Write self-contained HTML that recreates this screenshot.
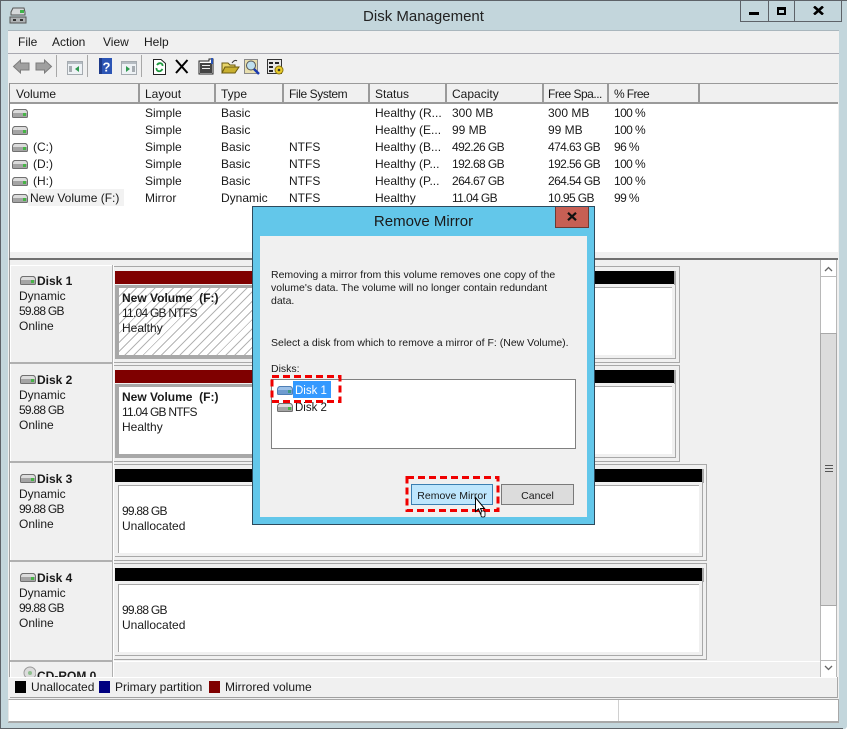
<!DOCTYPE html>
<html><head><meta charset="utf-8"><style>
html,body{margin:0;padding:0;background:#fff}
#w{position:relative;width:847px;height:730px;overflow:hidden;background:#fff;font:12px "Liberation Sans",sans-serif;color:#1a1a1a}
#w div,#w svg.a{position:absolute}
.t{white-space:nowrap;line-height:15px}
.n{letter-spacing:-.6px}
.u{letter-spacing:-.75px}
.b{font-weight:bold}
</style></head><body><div id="w">
<svg width="0" height="0" style="position:absolute"><defs>
<symbol id="d" viewBox="0 0 16 10"><path d="M2.500 1.500H13.500Q15.500 2.500 15.500 4.500V8.500Q15.500 9.500 14.500 9.500H1.500Q.5 9.500 .5 8.500V4.500Q.5 2.500 2.500 1.500Z" fill="#dcdcdc" stroke="#707070"/><rect x="1" y="5" width="14" height="4" fill="#a4a4a4"/><rect x="11" y="5" width="3" height="3" fill="#46b446"/></symbol>
<symbol id="db" viewBox="0 0 16 10"><path d="M2.500 1.500H13.500Q15.500 2.500 15.500 4.500V8.500Q15.500 9.500 14.500 9.500H1.500Q.5 9.500 .5 8.500V4.500Q.5 2.500 2.500 1.500Z" fill="#9cc0e8" stroke="#4f7fb5"/><rect x="1" y="5" width="14" height="4" fill="#6f9ccf"/><rect x="11" y="5" width="3" height="3" fill="#3f9a7f"/></symbol>
</defs></svg>

<!-- window frame -->
<div style="left:0;top:0;width:847px;height:729px;background:#c3d6dc;border-radius:0 0 3px 3px"></div>
<div style="left:0;top:0;width:847px;height:1px;background:#5d6268"></div>
<div style="left:0;top:0;width:1px;height:729px;background:#5d6268"></div>
<div style="left:0;top:728px;width:843px;height:1px;background:#5d6268"></div>
<!-- title -->
<svg class="a" style="left:9px;top:7px" width="18" height="17" viewBox="0 0 18 17"><path d="M2 5L4 1H15L16 5V8H2Z" fill="#d5d8da" stroke="#555"/><rect x="11" y="3" width="4" height="3" fill="#3fb34a"/><rect x="1" y="10" width="16" height="6" fill="#b0b4b6" stroke="#555"/><rect x="4" y="12" width="3" height="2" fill="#333"/><rect x="11" y="12" width="3" height="2" fill="#333"/></svg>
<div class="t" style="left:0;top:9px;width:847px;text-align:center;font-size:15px;color:#222">Disk Management</div>
<div style="left:740px;top:0;width:102px;height:22px;box-sizing:border-box;border:1px solid #5d6268;border-top:0"></div>
<div style="left:768px;top:0;width:1px;height:21px;background:#5d6268"></div>
<div style="left:794px;top:0;width:1px;height:21px;background:#5d6268"></div>
<div style="left:749px;top:12px;width:10px;height:3px;background:#000"></div>
<div style="left:777px;top:7px;width:9px;height:8px;box-sizing:border-box;border:2px solid #000;border-top-width:3px"></div>
<svg class="a" style="left:813px;top:6px" width="11" height="9" viewBox="0 0 11 9"><path d="M1 .5L10 8.500M10 .5L1 8.500" stroke="#000" stroke-width="2.600"/></svg>

<!-- client -->
<div style="left:8px;top:31px;width:831px;height:692px;background:#f0f0f0"></div>
<div style="left:8px;top:30px;width:831px;height:1px;background:#a9b6bd"></div>
<div style="left:8px;top:53px;width:831px;height:1px;background:#a8a8b0"></div>
<div class="t" style="left:18px;top:35px">File</div>
<div class="t" style="left:52px;top:35px">Action</div>
<div class="t" style="left:103px;top:35px">View</div>
<div class="t" style="left:144px;top:35px">Help</div>

<!-- toolbar -->
<svg class="a" style="left:10px;top:55px" width="280" height="28" viewBox="0 0 280 28">
<path d="M3.500 11.500L10.500 5V8H19V15H10.500V18Z" fill="#a0a0a0" stroke="#7c7c7c"/>
<path d="M41.500 11.500L34.500 5V8H26V15H34.500V18Z" fill="#a0a0a0" stroke="#7c7c7c"/>
<rect x="46" y="0" width="1" height="22" fill="#a8a8a8"/>
<rect x="57.500" y="6.500" width="15" height="13" fill="#eef2f5" stroke="#a5abb0"/><rect x="58" y="7" width="14" height="2" fill="#b5bcc2"/><path d="M69 11L65 14L69 17Z" fill="#2f9a4f"/><rect x="59" y="11" width="3" height="6" fill="#a5abb0"/>
<rect x="77" y="0" width="1" height="22" fill="#a8a8a8"/>
<rect x="89" y="3" width="13" height="16" fill="#2c55b5"/><rect x="89" y="3" width="3" height="16" fill="#1d3a8a"/>
<text x="92.500" y="16.500" font-family="Liberation Sans" font-weight="bold" font-size="13" fill="#fff">?</text>
<rect x="111.500" y="6.500" width="15" height="13" fill="#eef2f5" stroke="#a5abb0"/><rect x="112" y="7" width="14" height="2" fill="#b5bcc2"/><path d="M116 11L120 14L116 17Z" fill="#2f9a4f"/><rect x="122" y="11" width="3" height="6" fill="#a5abb0"/>
<rect x="131" y="0" width="1" height="22" fill="#a8a8a8"/>
<path d="M143.500 4.500H151L155.500 8.500V19.500H143.500Z" fill="#fff" stroke="#222"/><path d="M147 10C149 7 153 8 152.500 11M152.500 14C150 18 146 16 146.500 13" stroke="#1f9a3f" stroke-width="1.800" fill="none"/>
<path d="M166 5L177.500 18M177.500 5L166 18" stroke="#000" stroke-width="2"/>
<path d="M189 6H199V4H203V19H189Z" fill="#fff" stroke="#222"/><rect x="190" y="8" width="12" height="10" fill="#444"/><rect x="192" y="10" width="8" height="1" fill="#eee"/><rect x="192" y="13" width="8" height="1" fill="#eee"/><rect x="201" y="3" width="2" height="6" fill="#2c55b5"/>
<path d="M212 8H218L220 10H225V18H212Z" fill="#e8d56a" stroke="#6a5a10"/><path d="M212 18L215 12H229L225 18Z" fill="#c9b030" stroke="#6a5a10"/><path d="M222 8C224 5 226 5 227 6" stroke="#333" fill="none"/>
<rect x="234.500" y="4.500" width="13" height="14" fill="#e8dfae" stroke="#888"/><circle cx="241" cy="10.500" r="4.500" fill="#bfe0ef" stroke="#555"/><path d="M244 14L249 19" stroke="#1a3ab0" stroke-width="2.500"/>
<rect x="257.500" y="4.500" width="14" height="14" fill="#e8e8e8" stroke="#333"/><rect x="259" y="7" width="4" height="2" fill="#222"/><rect x="265" y="7" width="4" height="2" fill="#222"/><rect x="259" y="11" width="4" height="2" fill="#222"/><rect x="259" y="15" width="4" height="2" fill="#222"/><circle cx="269" cy="15" r="4" fill="#e8cb2a" stroke="#8a7510"/><circle cx="269" cy="15" r="1.300" fill="#333"/>
</svg>

<!-- list header -->
<div style="left:9px;top:83px;width:829px;height:1px;background:#9a9a9a"></div>
<div style="left:9px;top:102px;width:829px;height:2px;background:#9a9a9a"></div>
<div style="left:9px;top:83px;width:1px;height:175px;background:#8a8a8a"></div>
<div style="left:138px;top:84px;width:2px;height:18px;background:#9a9a9a"></div>
<div style="left:214px;top:84px;width:2px;height:18px;background:#9a9a9a"></div>
<div style="left:282px;top:84px;width:2px;height:18px;background:#9a9a9a"></div>
<div style="left:368px;top:84px;width:2px;height:18px;background:#9a9a9a"></div>
<div style="left:445px;top:84px;width:2px;height:18px;background:#9a9a9a"></div>
<div style="left:542px;top:84px;width:2px;height:18px;background:#9a9a9a"></div>
<div style="left:607px;top:84px;width:2px;height:18px;background:#9a9a9a"></div>
<div style="left:698px;top:84px;width:2px;height:18px;background:#9a9a9a"></div>
<div class="t" style="left:16px;top:87px">Volume</div>
<div class="t" style="left:145px;top:87px">Layout</div>
<div class="t" style="left:221px;top:87px">Type</div>
<div class="t" style="left:289px;top:87px;letter-spacing:-.4px">File System</div>
<div class="t" style="left:375px;top:87px">Status</div>
<div class="t" style="left:452px;top:87px">Capacity</div>
<div class="t" style="left:548px;top:87px;letter-spacing:-.5px">Free Spa...</div>
<div class="t" style="left:614px;top:87px;letter-spacing:-.6px">% Free</div>

<!-- list body -->
<div style="left:10px;top:104px;width:828px;height:148px;background:#fff"></div>
<div style="left:10px;top:252px;width:828px;height:6px;background:#f0f0f0"></div>
<div style="left:28px;top:189px;width:96px;height:17px;background:#f2f2f2"></div>
<svg class="a" style="left:12px;top:108px" width="16" height="10"><use href="#d"/></svg>
<svg class="a" style="left:12px;top:125px" width="16" height="10"><use href="#d"/></svg>
<svg class="a" style="left:12px;top:142px" width="16" height="10"><use href="#d"/></svg>
<svg class="a" style="left:12px;top:159px" width="16" height="10"><use href="#d"/></svg>
<svg class="a" style="left:12px;top:176px" width="16" height="10"><use href="#d"/></svg>
<svg class="a" style="left:12px;top:193px" width="16" height="10"><use href="#d"/></svg>

<div class="t" style="left:145px;top:106px">Simple</div><div class="t" style="left:221px;top:106px">Basic</div><div class="t" style="left:375px;top:106px">Healthy (R...</div><div class="t" style="left:452px;top:106px">300 MB</div><div class="t" style="left:548px;top:106px">300 MB</div><div class="t n" style="left:614px;top:106px">100 %</div>
<div class="t" style="left:145px;top:123px">Simple</div><div class="t" style="left:221px;top:123px">Basic</div><div class="t" style="left:375px;top:123px">Healthy (E...</div><div class="t" style="left:452px;top:123px">99 MB</div><div class="t" style="left:548px;top:123px">99 MB</div><div class="t n" style="left:614px;top:123px">100 %</div>
<div class="t" style="left:33px;top:140px">(C:)</div><div class="t" style="left:145px;top:140px">Simple</div><div class="t" style="left:221px;top:140px">Basic</div><div class="t" style="left:289px;top:140px">NTFS</div><div class="t" style="left:375px;top:140px">Healthy (B...</div><div class="t n" style="left:452px;top:140px">492.26 GB</div><div class="t n" style="left:548px;top:140px">474.63 GB</div><div class="t n" style="left:614px;top:140px">96 %</div>
<div class="t" style="left:33px;top:157px">(D:)</div><div class="t" style="left:145px;top:157px">Simple</div><div class="t" style="left:221px;top:157px">Basic</div><div class="t" style="left:289px;top:157px">NTFS</div><div class="t" style="left:375px;top:157px">Healthy (P...</div><div class="t n" style="left:452px;top:157px">192.68 GB</div><div class="t n" style="left:548px;top:157px">192.56 GB</div><div class="t n" style="left:614px;top:157px">100 %</div>
<div class="t" style="left:33px;top:174px">(H:)</div><div class="t" style="left:145px;top:174px">Simple</div><div class="t" style="left:221px;top:174px">Basic</div><div class="t" style="left:289px;top:174px">NTFS</div><div class="t" style="left:375px;top:174px">Healthy (P...</div><div class="t n" style="left:452px;top:174px">264.67 GB</div><div class="t n" style="left:548px;top:174px">264.54 GB</div><div class="t n" style="left:614px;top:174px">100 %</div>
<div class="t" style="left:30px;top:191px">New Volume (F:)</div><div class="t" style="left:145px;top:191px">Mirror</div><div class="t" style="left:221px;top:191px">Dynamic</div><div class="t" style="left:289px;top:191px">NTFS</div><div class="t" style="left:375px;top:191px">Healthy</div><div class="t n" style="left:452px;top:191px">11.04 GB</div><div class="t n" style="left:548px;top:191px">10.95 GB</div><div class="t n" style="left:614px;top:191px">99 %</div>

<!-- split -->
<div style="left:9px;top:258px;width:829px;height:2px;background:#707070"></div>
<div style="left:9px;top:260px;width:1px;height:417px;background:#a0a0a0"></div>

<!-- left column -->
<div style="left:10px;top:265px;width:1px;height:412px;background:#fff"></div>
<div style="left:112px;top:265px;width:1px;height:412px;background:#b0b0b0"></div>
<div style="left:113px;top:265px;width:1px;height:412px;background:#fff"></div>
<div style="left:10px;top:265px;width:102px;height:1px;background:#fff"></div>
<div style="left:10px;top:362px;width:103px;height:2px;background:#b0b0b0"></div>
<div style="left:10px;top:461px;width:103px;height:2px;background:#b0b0b0"></div>
<div style="left:10px;top:560px;width:103px;height:2px;background:#b0b0b0"></div>
<div style="left:10px;top:660px;width:103px;height:2px;background:#b0b0b0"></div>

<svg class="a" style="left:20px;top:275px" width="16" height="10"><use href="#d"/></svg>
<div class="t b" style="left:37px;top:274px">Disk 1</div>
<div class="t" style="left:19px;top:289px">Dynamic</div><div class="t u" style="left:19px;top:304px">59.88 GB</div><div class="t" style="left:19px;top:319px">Online</div>
<svg class="a" style="left:20px;top:374px" width="16" height="10"><use href="#d"/></svg>
<div class="t b" style="left:37px;top:373px">Disk 2</div>
<div class="t" style="left:19px;top:388px">Dynamic</div><div class="t u" style="left:19px;top:403px">59.88 GB</div><div class="t" style="left:19px;top:418px">Online</div>
<svg class="a" style="left:20px;top:473px" width="16" height="10"><use href="#d"/></svg>
<div class="t b" style="left:37px;top:472px">Disk 3</div>
<div class="t" style="left:19px;top:487px">Dynamic</div><div class="t u" style="left:19px;top:502px">99.88 GB</div><div class="t" style="left:19px;top:517px">Online</div>
<svg class="a" style="left:20px;top:572px" width="16" height="10"><use href="#d"/></svg>
<div class="t b" style="left:37px;top:571px">Disk 4</div>
<div class="t" style="left:19px;top:586px">Dynamic</div><div class="t u" style="left:19px;top:601px">99.88 GB</div><div class="t" style="left:19px;top:616px">Online</div>
<div class="t b" style="left:37px;top:669px">CD-ROM 0</div>
<svg class="a" style="left:20px;top:665px" width="16" height="12"><circle cx="10" cy="8" r="6" fill="#dcdcdc" stroke="#999"/><circle cx="10" cy="8" r="2" fill="#8fbf8f"/></svg>

<!-- disk 1 -->
<div style="left:114px;top:266px;width:566px;height:97px;box-sizing:border-box;border:1px solid #a8a8a8;border-left:0"></div>
<div style="left:115px;top:271px;width:559px;height:13px;background:#000"></div>
<div style="left:674px;top:271px;width:2px;height:14px;background:#a8a8a8"></div>
<div style="left:115px;top:285px;width:561px;height:74px;box-sizing:border-box;border-right:1px solid #a8a8a8;border-bottom:1px solid #a8a8a8"></div>
<div style="left:118px;top:287px;width:554px;height:68px;background:#fff;border-top:1px solid #a8a8a8;box-sizing:border-box"></div>
<div style="left:115px;top:271px;width:300px;height:13px;background:#7f0000"></div>
<div style="left:115px;top:285px;width:300px;height:73px;box-sizing:border-box;border:4px solid #a8a8a8;border-top-width:3px;border-bottom-width:3px;background:repeating-linear-gradient(135deg,#fff 0,#fff 5.500px,#b4b4b4 5.500px,#b4b4b4 6.500px)"></div>
<div class="t b" style="left:122px;top:291px">New Volume&nbsp; (F:)</div>
<div class="t u" style="left:122px;top:306px">11.04 GB NTFS</div>
<div class="t" style="left:122px;top:321px">Healthy</div>

<!-- disk 2 -->
<div style="left:114px;top:365px;width:566px;height:97px;box-sizing:border-box;border:1px solid #a8a8a8;border-left:0"></div>
<div style="left:115px;top:370px;width:559px;height:13px;background:#000"></div>
<div style="left:674px;top:370px;width:2px;height:14px;background:#a8a8a8"></div>
<div style="left:115px;top:384px;width:561px;height:74px;box-sizing:border-box;border-right:1px solid #a8a8a8;border-bottom:1px solid #a8a8a8"></div>
<div style="left:118px;top:386px;width:554px;height:68px;background:#fff;border-top:1px solid #a8a8a8;box-sizing:border-box"></div>
<div style="left:115px;top:370px;width:300px;height:13px;background:#7f0000"></div>
<div style="left:115px;top:384px;width:300px;height:73px;box-sizing:border-box;border:4px solid #a8a8a8;border-top-width:3px;border-bottom-width:3px;background:#fff"></div>
<div class="t b" style="left:122px;top:390px">New Volume&nbsp; (F:)</div>
<div class="t u" style="left:122px;top:405px">11.04 GB NTFS</div>
<div class="t" style="left:122px;top:420px">Healthy</div>

<!-- disk 3 -->
<div style="left:114px;top:464px;width:593px;height:97px;box-sizing:border-box;border:1px solid #a8a8a8;border-left:0"></div>
<div style="left:115px;top:469px;width:587px;height:13px;background:#000"></div>
<div style="left:702px;top:469px;width:2px;height:14px;background:#a8a8a8"></div>
<div style="left:115px;top:483px;width:588px;height:74px;box-sizing:border-box;border-right:1px solid #a8a8a8;border-bottom:1px solid #a8a8a8"></div>
<div style="left:118px;top:485px;width:581px;height:68px;background:#fff;border-top:1px solid #a8a8a8;border-left:1px solid #a8a8a8;box-sizing:border-box"></div>
<div class="t u" style="left:122px;top:504px">99.88 GB</div>
<div class="t" style="left:122px;top:519px">Unallocated</div>

<!-- disk 4 -->
<div style="left:114px;top:563px;width:593px;height:97px;box-sizing:border-box;border:1px solid #a8a8a8;border-left:0"></div>
<div style="left:115px;top:568px;width:587px;height:13px;background:#000"></div>
<div style="left:702px;top:568px;width:2px;height:14px;background:#a8a8a8"></div>
<div style="left:115px;top:582px;width:588px;height:74px;box-sizing:border-box;border-right:1px solid #a8a8a8;border-bottom:1px solid #a8a8a8"></div>
<div style="left:118px;top:584px;width:581px;height:68px;background:#fff;border-top:1px solid #a8a8a8;border-left:1px solid #a8a8a8;box-sizing:border-box"></div>
<div class="t u" style="left:122px;top:603px">99.88 GB</div>
<div class="t" style="left:122px;top:618px">Unallocated</div>
<div style="left:114px;top:661px;width:706px;height:1px;background:#fff"></div>

<!-- scrollbar -->
<div style="left:820px;top:260px;width:17px;height:417px;background:#fff;box-sizing:border-box;border-left:1px solid #b8b8b8;border-right:1px solid #b8b8b8"></div>
<div style="left:820px;top:333px;width:17px;height:273px;background:#dcdcdc;box-sizing:border-box;border:1px solid #a8a8a8"></div>
<div style="left:820px;top:276px;width:17px;height:1px;background:#b8b8b8"></div>
<div style="left:820px;top:660px;width:17px;height:1px;background:#b8b8b8"></div>
<svg class="a" style="left:824px;top:266px" width="9" height="6"><path d="M1 5L4.500 1.500L8 5" stroke="#666" stroke-width="1.300" fill="none"/></svg>
<svg class="a" style="left:824px;top:665px" width="9" height="6"><path d="M1 1L4.500 4.500L8 1" stroke="#666" stroke-width="1.300" fill="none"/></svg>
<div style="left:825px;top:465px;width:8px;height:1px;background:#555"></div>
<div style="left:825px;top:468px;width:8px;height:1px;background:#555"></div>
<div style="left:825px;top:471px;width:8px;height:1px;background:#555"></div>

<!-- legend -->
<div style="left:10px;top:677px;width:827px;height:21px;background:#f0f0f0;border-top:1px solid #fff;border-bottom:1px solid #a0a0a0;box-sizing:border-box"></div>
<div style="left:837px;top:677px;width:1px;height:21px;background:#a8a8a8"></div>
<div style="left:15px;top:681px;width:11px;height:12px;background:#000"></div>
<div class="t" style="left:31px;top:680px">Unallocated</div>
<div style="left:99px;top:681px;width:11px;height:12px;background:#000080"></div>
<div class="t" style="left:115px;top:680px">Primary partition</div>
<div style="left:209px;top:681px;width:11px;height:12px;background:#7f0000"></div>
<div class="t" style="left:225px;top:680px">Mirrored volume</div>

<!-- status -->
<div style="left:8px;top:699px;width:831px;height:23px;background:#fff;box-sizing:border-box;border:1px solid #a8a8a8;border-left-color:#e8e8e8"></div>
<div style="left:618px;top:700px;width:1px;height:21px;background:#d0d0d0"></div>
<div style="left:8px;top:722px;width:831px;height:1px;background:#a8a8a8"></div>

<!-- dialog -->
<div style="left:252px;top:206px;width:343px;height:319px;box-sizing:border-box;background:#63c7ea;border:1px solid #2e4a5c"></div>
<div style="left:260px;top:236px;width:327px;height:281px;background:#f0f0f0"></div>
<div class="t" style="left:252px;top:212px;width:343px;text-align:center;font-size:15px;line-height:18px;padding-top:0;margin-top:1px">Remove Mirror</div>
<div style="left:555px;top:207px;width:34px;height:21px;box-sizing:border-box;background:#c75f54;border:1px solid #6b3a34;border-top:0"></div>
<svg class="a" style="left:567px;top:212px" width="10" height="9" viewBox="0 0 10 9"><path d="M1 .8L9 8.200M9 .8L1 8.200" stroke="#111" stroke-width="2.200"/></svg>
<div class="t" style="left:271px;top:269px;font-size:10.500px;line-height:13px">Removing a mirror from this volume removes one copy of the<br>volume's data. The volume will no longer contain redundant<br>data.</div>
<div class="t" style="left:271px;top:337px;font-size:10.500px;line-height:13px">Select a disk from which to remove a mirror of F: (New Volume).</div>
<div class="t" style="left:271px;top:363px;font-size:10.500px;line-height:13px">Disks:</div>
<div style="left:271px;top:379px;width:305px;height:70px;box-sizing:border-box;background:#fff;border:1px solid #808080"></div>
<div style="left:293px;top:381px;width:38px;height:17px;background:#3399ff"></div>
<svg class="a" style="left:277px;top:385px" width="16" height="10"><use href="#db"/></svg>
<svg class="a" style="left:277px;top:402px" width="16" height="10"><use href="#d"/></svg>
<div class="t" style="left:295px;top:384px;font-size:11.500px;color:#fff">Disk 1</div>
<div class="t" style="left:295px;top:401px;font-size:11.500px">Disk 2</div>
<div style="left:411px;top:484px;width:82px;height:21px;box-sizing:border-box;background:#bee6fd;border:1px solid #3c7fb1"></div>
<div class="t" style="left:411px;top:489px;width:82px;text-align:center;font-size:10.500px">Remove Mirror</div>
<div style="left:501px;top:484px;width:73px;height:21px;box-sizing:border-box;background:#dcdcdc;border:1px solid #7a7a7a"></div>
<div class="t" style="left:501px;top:489px;width:73px;text-align:center;font-size:10.500px">Cancel</div>
<svg class="a" style="left:0;top:0" width="847" height="730">
<rect x="272" y="376.500" width="68" height="25" fill="none" stroke="#f00000" stroke-width="3" stroke-dasharray="7 4"/>
<rect x="407" y="477.500" width="91" height="33" fill="none" stroke="#f00000" stroke-width="3" stroke-dasharray="7 4"/>
<path d="M475.500 497.500V511.500L478.500 509L480.500 514L482.500 513L480.500 508.500L484.500 508.500Z" fill="#fff" stroke="#000"/>
<rect x="481" y="511" width="4" height="6" rx="1.500" fill="#fff" stroke="#000" stroke-width=".8"/>
</svg>
</div></body></html>
